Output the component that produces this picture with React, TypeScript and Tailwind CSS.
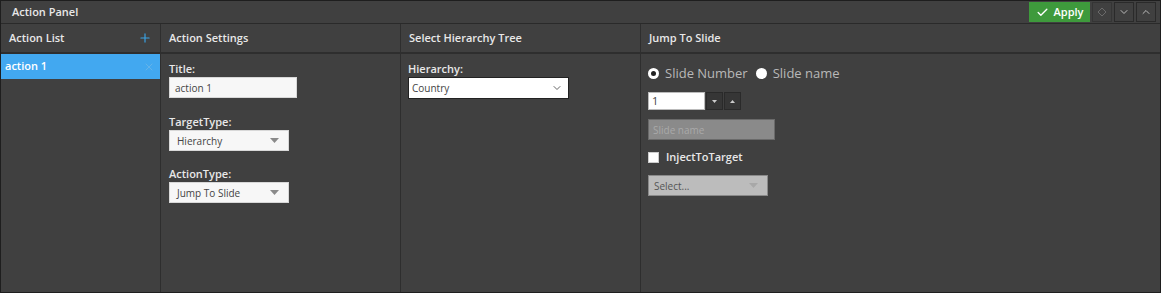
import { Check, ChevronDown, ChevronUp, Plus, X } from "lucide-react";

const font = { fontFamily: '"Open Sans", "Noto Sans", Arial, sans-serif' };

function Caret({ color = "#8a8a8a" }: { color?: string }) {
  return (
    <svg width="9" height="5" viewBox="0 0 9 5">
      <path d="M0 0H9L4.5 5Z" fill={color} />
    </svg>
  );
}

function Dropdown({ value, width }: { value: string; width: string }) {
  return (
    <div className={`flex h-[21px] ${width} items-center justify-between border border-[#d8d8d8] bg-[#f7f7f7] pl-[7px] pr-[9px] text-[10px] leading-[14px] text-[#444]`}>
      <span>{value}</span>
      <Caret />
    </div>
  );
}

export default function App() {
  return (
    <div style={font} className="flex h-[293px] w-[1161px] flex-col border border-[#1e1e1e] bg-[#404040] text-[#e8e8e8]">
      {/* title bar */}
      <div className="flex h-[23px] items-center justify-between border-b border-[#2a2a2a] pl-[11px] pr-[4px]">
        <span className="text-[11px] font-semibold">Action Panel</span>
        <div className="flex items-center gap-[2px]">
          <button className="flex h-[20px] w-[61px] items-center justify-center gap-[5px] bg-[#3e9a3c] text-[11px] font-semibold text-white">
            <Check size={13} strokeWidth={2.5} />
            Apply
          </button>
          <button className="flex h-[20px] w-[20px] items-center justify-center border border-[#353535] bg-[#404040]">
            <svg width="10" height="10" viewBox="0 0 10 10">
              <path d="M5 1L9 5L5 9L1 5Z" fill="none" stroke="#6a6a6a" strokeWidth="1" />
            </svg>
          </button>
          <button className="flex h-[20px] w-[20px] items-center justify-center border border-[#2a2a2a] bg-[#404040] text-[#bbb]">
            <ChevronDown size={12} />
          </button>
          <button className="flex h-[20px] w-[20px] items-center justify-center border border-[#2a2a2a] bg-[#404040] text-[#bbb]">
            <ChevronUp size={12} />
          </button>
        </div>
      </div>

      {/* columns */}
      <div className="flex flex-1">
        {/* action list */}
        <div className="flex w-[160px] flex-col border-r border-[#2e2e2e]">
          <div className="flex h-[30px] items-center justify-between border-b-2 border-[#2e2e2e] pl-[8px] pr-[8px]">
            <span className="text-[11px] font-semibold">Action List</span>
            <Plus size={14} className="text-[#3aa3e6]" strokeWidth={2} />
          </div>
          <div className="flex h-[25px] items-center justify-between bg-[#42a8f0] pl-[4px] pr-[5px]">
            <span className="text-[11px] font-semibold text-white">action 1</span>
            <X size={12} className="text-[#6fb7e8]" strokeWidth={1.5} />
          </div>
        </div>

        {/* action settings */}
        <div className="flex w-[240px] flex-col border-r border-[#2e2e2e]">
          <div className="flex h-[30px] items-center border-b-2 border-[#2e2e2e] pl-[8px]">
            <span className="text-[11px] font-semibold">Action Settings</span>
          </div>
          <div className="flex flex-col pl-[8px] pt-[8px] text-[11px] leading-[14px]">
            <span className="font-semibold">Title:</span>
            <div className="mt-[1px] flex h-[21px] w-[128px] items-center border border-[#d8d8d8] bg-[#f7f7f7] pl-[5px] text-[10px] text-[#444]">
              action 1
            </div>
            <span className="mt-[17px] font-semibold">TargetType:</span>
            <div className="mt-[1px]">
              <Dropdown value="Hierarchy" width="w-[120px]" />
            </div>
            <span className="mt-[16px] font-semibold">ActionType:</span>
            <div className="mt-[1px]">
              <Dropdown value="Jump To Slide" width="w-[120px]" />
            </div>
          </div>
        </div>

        {/* hierarchy */}
        <div className="flex w-[240px] flex-col border-r border-[#2e2e2e]">
          <div className="flex h-[30px] items-center border-b-2 border-[#2e2e2e] pl-[8px]">
            <span className="text-[11px] font-semibold">Select Hierarchy Tree</span>
          </div>
          <div className="flex flex-col pl-[7px] pt-[8px] text-[11px] leading-[14px]">
            <span className="font-semibold">Hierarchy:</span>
            <div className="mt-[1px] flex h-[22px] w-[161px] items-center justify-between border border-[#222] bg-white pl-[3px] pr-[5px] text-[10px] text-[#444]">
              <span>Country</span>
              <ChevronDown size={12} className="text-[#666]" />
            </div>
          </div>
        </div>

        {/* jump to slide */}
        <div className="flex flex-1 flex-col">
          <div className="flex h-[30px] items-center border-b-2 border-[#2e2e2e] pl-[8px]">
            <span className="text-[11px] font-semibold">Jump To Slide</span>
          </div>
          <div className="flex flex-col pl-[7px] pt-[11px] leading-[14px]">
            <div className="flex h-[16px] items-center text-[13px] text-[#b8b8b8]">
              <span className="mr-[6px] flex h-[11px] w-[11px] items-center justify-center rounded-full bg-white">
                <span className="h-[5px] w-[5px] rounded-full bg-[#222]" />
              </span>
              <span>Slide Number</span>
              <span className="ml-[8px] mr-[6px] h-[11px] w-[11px] rounded-full bg-white" />
              <span>Slide name</span>
            </div>
            <div className="mt-[11px] flex items-center gap-[1px]">
              <div className="flex h-[18px] w-[57px] items-center border border-[#bbb] bg-white pl-[3px] text-[11px] text-[#444]">
                1
              </div>
              <button className="flex h-[18px] w-[17px] items-center justify-center border border-[#2a2a2a] bg-[#363636]">
                <svg width="5" height="3" viewBox="0 0 5 3"><path d="M0 0H5L2.5 3Z" fill="#ccc" /></svg>
              </button>
              <button className="flex h-[18px] w-[17px] items-center justify-center border border-[#2a2a2a] bg-[#363636]">
                <svg width="5" height="3" viewBox="0 0 5 3"><path d="M0 3H5L2.5 0Z" fill="#ccc" /></svg>
              </button>
            </div>
            <div className="mt-[9px] flex h-[21px] w-[127px] items-center border border-[#6a6a6a] bg-[#8a8a8a] pl-[4px] text-[10px] text-[#a9a9a9]">
              Slide name
            </div>
            <div className="mt-[10px] flex h-[14px] items-center">
              <span className="mr-[7px] h-[11px] w-[11px] border border-[#ccc] bg-white" />
              <span className="text-[11px] font-semibold">InjectToTarget</span>
            </div>
            <div className="mt-[11px] flex h-[21px] w-[120px] items-center justify-between border border-[#8a8a8a] bg-[#bcbcbc] pl-[5px] pr-[9px] text-[10px] text-[#555]">
              <span>Select...</span>
              <Caret color="#a8a8a8" />
            </div>
          </div>
        </div>
      </div>
    </div>
  );
}
